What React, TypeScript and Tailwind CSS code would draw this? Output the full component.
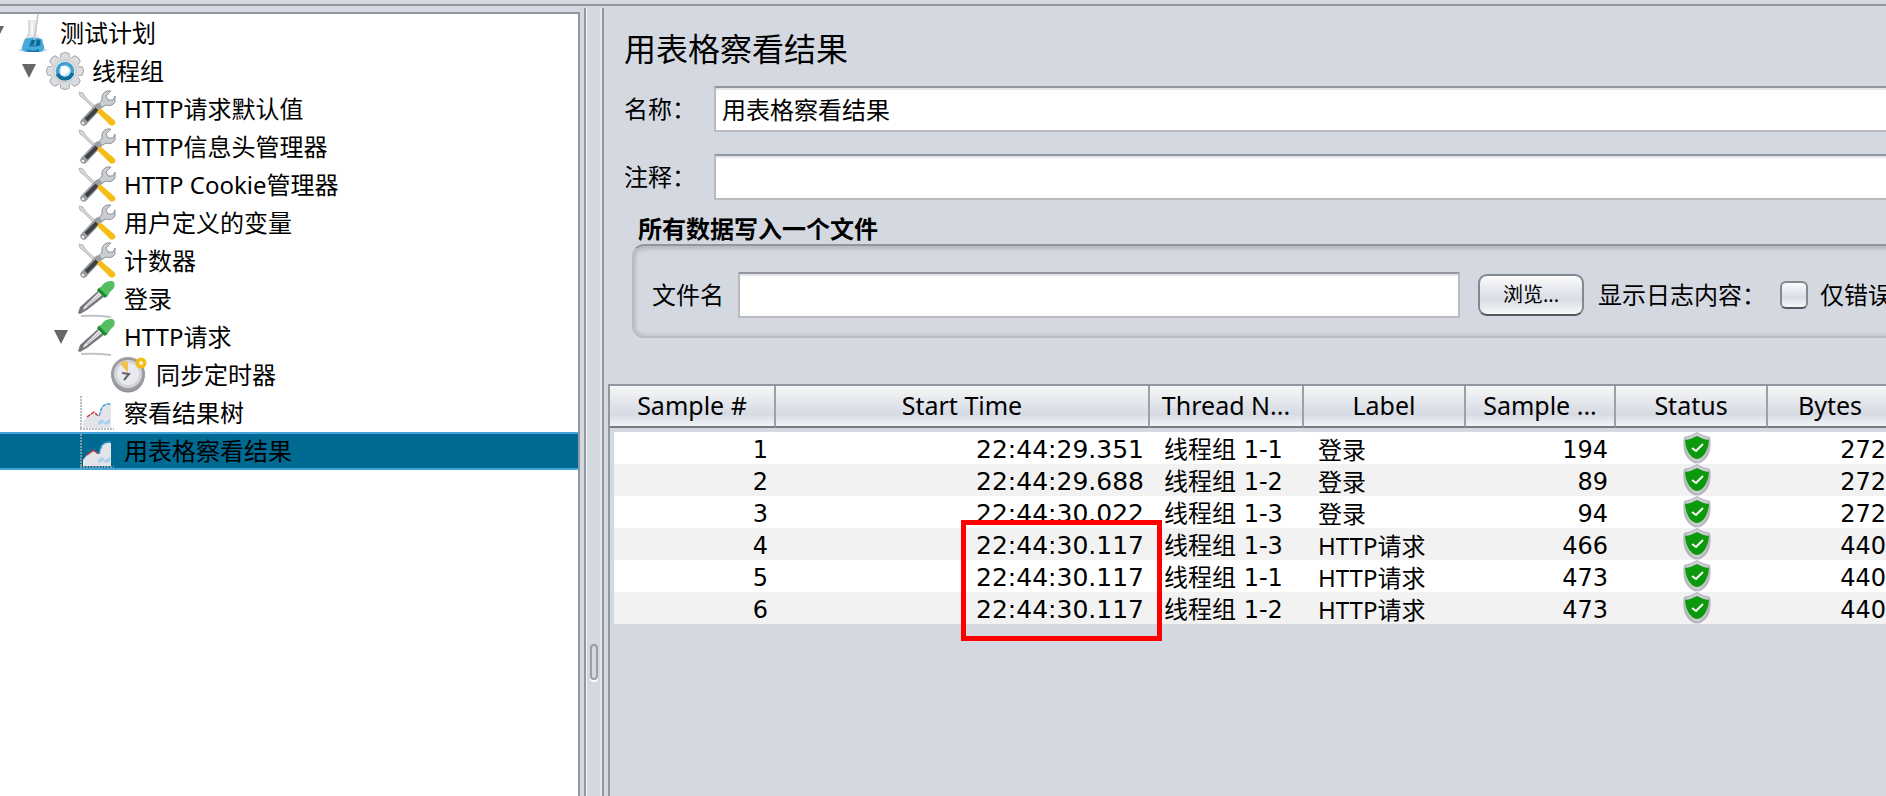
import type { ReactNode } from "react";

type IconName = "plan" | "threads" | "config" | "sampler" | "timer" | "listener";

type TreeNode = {
  label: string;
  icon: IconName;
  indent: string;
  open?: boolean;
  selected?: boolean;
};

const tree: TreeNode[] = [
  { label: "测试计划", icon: "plan", indent: "-ml-[10px]", open: true },
  { label: "线程组", icon: "threads", indent: "ml-[22px]", open: true },
  { label: "HTTP请求默认值", icon: "config", indent: "ml-[54px]" },
  { label: "HTTP信息头管理器", icon: "config", indent: "ml-[54px]" },
  { label: "HTTP Cookie管理器", icon: "config", indent: "ml-[54px]" },
  { label: "用户定义的变量", icon: "config", indent: "ml-[54px]" },
  { label: "计数器", icon: "config", indent: "ml-[54px]" },
  { label: "登录", icon: "sampler", indent: "ml-[54px]" },
  { label: "HTTP请求", icon: "sampler", indent: "ml-[54px]", open: true },
  { label: "同步定时器", icon: "timer", indent: "ml-[86px]" },
  { label: "察看结果树", icon: "listener", indent: "ml-[54px]" },
  { label: "用表格察看结果", icon: "listener", indent: "ml-[54px]", selected: true },
];

const columns = [
  { title: "Sample #", width: "w-[166px]" },
  { title: "Start Time", width: "" },
  { title: "Thread N...", width: "w-[154px]" },
  { title: "Label", width: "w-[162px]" },
  { title: "Sample ...", width: "w-[150px]" },
  { title: "Status", width: "w-[152px]" },
  { title: "Bytes", width: "w-[126px]" },
];

const samples = [
  { id: 1, start: "22:44:29.351", thread: "线程组 1-1", label: "登录", time: 194, bytes: 272 },
  { id: 2, start: "22:44:29.688", thread: "线程组 1-2", label: "登录", time: 89, bytes: 272 },
  { id: 3, start: "22:44:30.022", thread: "线程组 1-3", label: "登录", time: 94, bytes: 272 },
  { id: 4, start: "22:44:30.117", thread: "线程组 1-3", label: "HTTP请求", time: 466, bytes: 440 },
  { id: 5, start: "22:44:30.117", thread: "线程组 1-1", label: "HTTP请求", time: 473, bytes: 440 },
  { id: 6, start: "22:44:30.117", thread: "线程组 1-2", label: "HTTP请求", time: 473, bytes: 440 },
];

const field =
  "h-[46px] min-w-0 border-2 border-[#b9bbc0] border-t-[#9196a0] bg-white px-[6px] pb-[2px] shadow-[inset_0_2px_1px_#e4e5e9] outline-none";

const cell = "p-0 pt-1 leading-7 whitespace-nowrap";

const numeric = "font-['DejaVu_Sans','Noto_Sans_CJK_SC',sans-serif]";

const icons: Record<IconName, ReactNode> = {
  plan: (
    <>
      <ellipse cx="19" cy="36" rx="14" ry="2" fill="#c9ccd0" />
      <path d="M15 6h8v14l7 11q3 6-3 7H12q-6-1-4-7l7-11z" fill="#e6e8ea" />
      <path d="M15 6v14l-6 9" fill="none" stroke="#d0d3d7" strokeWidth="1.5" />
      <path d="M11 25q8-3 17 0l2 8q1 4-4 5H12q-5-1-4-5z" fill="#45a9dc" />
      <path d="M13 35q6 3 12 0v3H14z" fill="#1479a8" />
      <path d="M16 31l2-5h3l-2 5zM22 32l1-6h3v5zM15 32h7" fill="#076a96" stroke="#14719c" />
      <path d="M24 0l-1 8-3 18" fill="none" stroke="#c3c6ca" strokeWidth="1.5" />
      <path d="M18 8v13" stroke="#f8f8f8" strokeWidth="2" />
    </>
  ),
  threads: (
    <>
      {[0, 45, 90, 135, 180, 225, 270, 315].map((deg) => (
        <path
          key={deg}
          d="M14 8L15 1.500Q19-.5 23 1.500L24 8z"
          transform={`rotate(${deg} 19 19)`}
          fill="#dcdde0"
          stroke="#a6a8ab"
        />
      ))}
      <circle cx="19" cy="19" r="14" fill="#d9dadd" />
      <circle cx="19" cy="19" r="11" fill="#e6e7e9" stroke="#c3c5c8" />
      <circle cx="19" cy="19" r="7.500" fill="#cfe2ee" stroke="#3f9fd2" strokeWidth="3.500" />
      <path d="M11.500 22a8 8 0 0 0 15-1" fill="none" stroke="#0b6e9c" strokeWidth="3.500" />
      <path d="M15 14h4l5 4-5 5h-4z" fill="#fff" />
    </>
  ),
  config: (
    <>
      <path d="M1 2l4 1 3 5 12 11-2 2L6 9 2 6z" fill="#d5d7da" stroke="#aaadb2" strokeWidth=".8" />
      <path d="M18 20L29 9" stroke="#8d9095" strokeWidth="5" />
      <path
        d="M33 1l-5 5 2 4h5l2-4v6q-3 5-9 3l-5 3-3-3 4-5q-1-7 5-9z"
        fill="#c9ccd0"
        stroke="#909398"
        strokeWidth="1"
      />
      <path d="M20 17L6 32" stroke="#9a9da1" strokeWidth="7" strokeLinecap="round" />
      <path d="M19 19L8 30" stroke="#3d4044" strokeWidth="4" />
      <circle cx="5" cy="33" r="2" fill="#f2f2f2" stroke="#85888c" />
      <path d="M19 22l3-4 14 12q3 3 0 5t-5-1z" fill="#f5bd15" />
    </>
  ),
  sampler: (
    <>
      <path d="M3 36q15-1 30 1" fill="none" stroke="#c0c3c8" strokeWidth="2" />
      <path d="M21 10l6 6L9 30l-7 4-2-1 2-6z" fill="#74777b" />
      <path d="M21 12l3 3L8 28l-3 2 1-3z" fill="#e9eaec" />
      <path d="M22 14L9 26" stroke="#aeb1b5" strokeWidth="1" />
      <path d="M20 8l9 9 3-5 4-4q2-6-2-7-7-1-11 6z" fill="#53be62" />
      <path d="M20 9l8 8" stroke="#168b2a" strokeWidth="3" />
    </>
  ),
  timer: (
    <>
      <circle cx="18" cy="20" r="16.500" fill="#8d8f93" />
      <circle cx="18" cy="18" r="15.500" fill="#d3d5d9" stroke="#9b9da2" strokeWidth="3" />
      <circle cx="18" cy="18" r="11" fill="#e9eaef" />
      <path d="M18 17L10 7q4-3 8-1z" fill="#f3c049" />
      <path d="M12 17l7 1-5 6" fill="none" stroke="#63666b" strokeWidth="2" />
      <circle cx="31" cy="7" r="5.500" fill="#f6bc14" />
      <circle cx="31" cy="7" r="2" fill="#fff6d5" />
    </>
  ),
  listener: (
    <>
      <path d="M3 2v33M2 35h34" stroke="#a5a8ae" strokeWidth="1.500" strokeDasharray="2 1" />
      <path d="M5 34V28l4-5 6-4 6 3 2-8 5-3h5v23z" fill="#e2e4e9" />
      <path d="M20 28l4-3 3 3 5-3v4l-4 2-3-2-4 2z" fill="#a9d1e8" />
      <path d="M9 23l7-5 4 4" fill="none" stroke="#d8343c" strokeWidth="1.500" strokeDasharray="4 1" />
      <path d="M21 22l3-9 4-3h5" fill="none" stroke="#3d9fd8" strokeWidth="1.500" strokeDasharray="4 1" />
    </>
  ),
};

function Shield() {
  return (
    <svg viewBox="0 0 30 32" className="mx-auto block h-8 w-[30px]" role="img" aria-label="success">
      <path d="M15 0q6 4 13 5 3 18-8 25-5 3-10 0Q-1 23 2 5q7-1 13-5z" fill="#9a9ca1" opacity=".7" />
      <path d="M15 1q5 4 11 5 2 15-7 22-4 3-8 0Q2 21 4 6q6-1 11-5z" fill="#cdcfd3" />
      <path d="M15 4q5 3 12 4-1 12-7 17-5 4-10 0Q4 20 3 8q7-1 12-4z" fill="#0b9a0e" />
      <path d="M10 16l4 3 7-7" fill="none" stroke="#fff" strokeWidth="2" />
    </svg>
  );
}

function TreeRow({ node }: { node: TreeNode }) {
  return (
    <li
      className={`h-[38px] ${
        node.selected ? "border-y-2 border-[#43a5dc] bg-[#006b92]" : "border-y-2 border-transparent"
      }`}
    >
      <div className={`flex h-[34px] items-center ${node.indent}`}>
        <span className="w-6 shrink-0">
          {node.open && (
            <svg viewBox="0 0 14 14" className="h-[14px] w-[14px]">
              <path d="M0 0h14L7 14z" fill="#65676b" />
            </svg>
          )}
        </span>
        <svg viewBox="0 0 38 38" className="mr-2 h-[38px] w-[38px] shrink-0">
          {icons[node.icon]}
        </svg>
        <span className="whitespace-nowrap">{node.label}</span>
      </div>
    </li>
  );
}

function ResultTable() {
  return (
    <div className="ml-1 grow border-t-2 border-l-2 border-[#9196a0]">
      <table className="w-[calc(100%+8px)] table-fixed border-separate border-spacing-0">
        <colgroup>
          {columns.map((col) => (
            <col key={col.title} className={col.width} />
          ))}
        </colgroup>
        <thead>
          <tr>
            {columns.map((col) => (
              <th
                key={col.title}
                className="h-[42px] border-r-2 border-b-2 border-r-[#9ca0a8] border-b-[#777a80] bg-linear-to-b from-[#f6f7f8] via-[#d6dae3] via-70% to-[#f3f4f6] p-0 pb-[2px] text-center text-[25px] leading-8 font-normal whitespace-nowrap"
              >
                {col.title}
              </th>
            ))}
          </tr>
        </thead>
        <tbody>
          <tr>
            <td colSpan={7} className="h-1 p-0" />
          </tr>
          {samples.map((row) => (
            <tr key={row.id} className="h-8 odd:bg-[#f2f2f2] even:bg-white">
              <td className={`border-l-4 border-[#d4d8e1] ${cell} pr-2 text-right ${numeric}`}>
                {row.id}
              </td>
              <td className={`relative ${cell} pr-[6px] text-right text-[25px] ${numeric}`}>
                {row.start}
                {row.id === 4 && (
                  <span className="pointer-events-none absolute -top-2 -right-3 z-10 h-[121px] w-[201px] border-5 border-[#ff0000]" />
                )}
              </td>
              <td className={`${cell} pl-[14px] ${numeric}`}>{row.thread}</td>
              <td className={`${cell} pl-[14px]`}>{row.label}</td>
              <td className={`${cell} pr-2 text-right ${numeric}`}>{row.time}</td>
              <td className="p-0 pl-[10px]">
                <Shield />
              </td>
              <td className={`${cell} pr-2 text-right ${numeric}`}>{row.bytes}</td>
            </tr>
          ))}
        </tbody>
      </table>
    </div>
  );
}

export default function App() {
  return (
    <div className="flex h-screen flex-col overflow-hidden bg-[#d4d8e1] pt-1 font-['Noto_Sans','Noto_Sans_CJK_SC',sans-serif] text-2xl leading-8 text-black">
      <div className="h-[2px] shrink-0 bg-[#9196a0]" />
      <div className="flex min-h-0 grow">
        {/* Test plan tree */}
        <nav className="mt-[6px] w-[580px] shrink-0 border-t-2 border-r-2 border-[#9196a0] bg-white">
          <ul>
            {tree.map((node) => (
              <TreeRow key={node.label} node={node} />
            ))}
          </ul>
        </nav>

        {/* Splitter */}
        <div className="mt-[2px] ml-1 w-5 shrink-0 border-x-2 border-[#9196a0] shadow-[inset_1px_0_#f4f5f7,inset_-2px_0_#e6e8ec]">
          <div className="mt-[636px] ml-1 h-9 w-2 rounded-sm border-2 border-[#9b9ea5] bg-[#d4d8e1] shadow-[0_2px_#fff]" />
        </div>

        {/* Listener panel */}
        <main className="flex min-w-0 grow flex-col overflow-hidden">
          <h1 className="mt-[23px] ml-5 text-[32px] leading-10">用表格察看结果</h1>
          <div className="mt-[17px] -mr-1 ml-5 flex items-center">
            <label htmlFor="name" className="w-[90px] shrink-0">
              名称：
            </label>
            <input id="name" className={`${field} grow`} defaultValue="用表格察看结果" />
          </div>
          <div className="mt-[22px] -mr-1 ml-5 flex items-center">
            <label htmlFor="comment" className="w-[90px] shrink-0">
              注释：
            </label>
            <input id="comment" className={`${field} grow`} />
          </div>

          <h2 className="mt-[14px] ml-[34px] leading-[30px] font-bold">所有数据写入一个文件</h2>
          <section className="-mr-4 ml-7 flex h-[94px] items-center rounded-xl border-2 border-[#b9bcc2] border-t-[#92969d] pt-2 pr-2 pl-[18px] shadow-[inset_0_3px_4px_#b4b7bd,inset_2px_-2px_3px_#c6c9cf]">
            <label htmlFor="filename" className="w-[86px] shrink-0">
              文件名
            </label>
            <input id="filename" className={`${field} grow`} />
            <button
              type="button"
              className="ml-[18px] h-[42px] w-[106px] shrink-0 rounded-[9px] border-2 border-[#85898f] border-b-[#55575b] bg-linear-to-b from-[#fbfbfc] via-[#d9dde5] via-60% to-[#f6f7f8] text-xl leading-6"
            >
              浏览...
            </button>
            <span className="ml-[14px] w-[182px] shrink-0 whitespace-nowrap">显示日志内容：</span>
            <input
              id="errors"
              type="checkbox"
              className="h-7 w-7 shrink-0 appearance-none rounded-md border-2 border-[#85898f] border-b-[#55575b] bg-linear-to-b from-[#fbfbfc] via-[#d9dde5] via-60% to-[#f6f7f8]"
            />
            <label htmlFor="errors" className="ml-3 shrink-0 whitespace-nowrap">
              仅错误
            </label>
          </section>

          <div className="mt-[46px] flex grow flex-col">
            <ResultTable />
          </div>
        </main>
      </div>
    </div>
  );
}
